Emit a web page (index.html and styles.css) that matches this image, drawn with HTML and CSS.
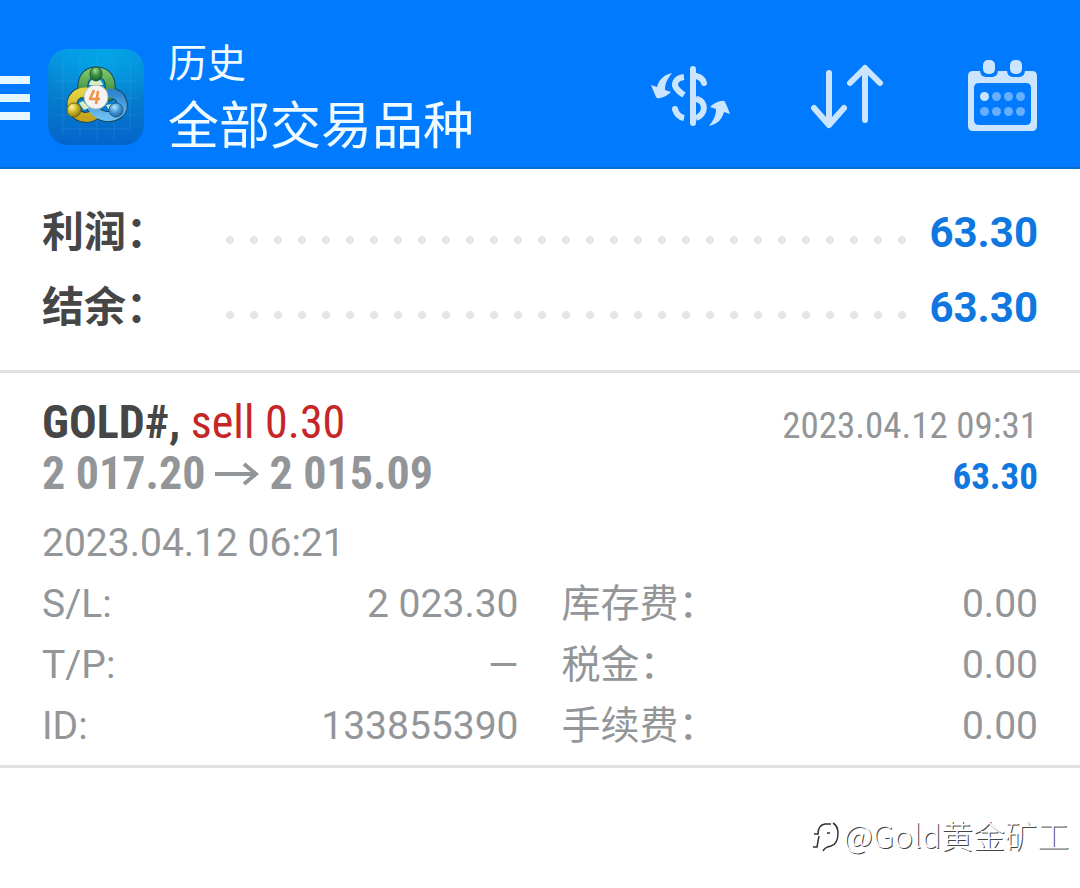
FILE: index.html
```html
<!DOCTYPE html>
<html lang="zh-CN">
<head>
<meta charset="utf-8">
<meta name="viewport" content="width=device-width, initial-scale=1">
<title>历史</title>
<link rel="stylesheet" href="styles.css">
</head>
<body>
<header class="topbar">
  <button class="icon-button menu" type="button" aria-label="菜单">
    <svg width="30" height="44" viewBox="0 0 30 44"><path d="M0 0h30v8H0zM0 18h30v8H0zM0 36h30v8H0z" fill="#e6f8ff"/></svg>
  </button>
  <svg class="logo" width="96" height="96" viewBox="0 0 96 96" aria-hidden="true">
    <defs>
      <linearGradient id="tile" x1="0" y1="0" x2="0" y2="1"><stop offset="0" stop-color="#0698e4"/><stop offset="0.5" stop-color="#067ccc"/><stop offset="1" stop-color="#0464cc"/></linearGradient>
      <radialGradient id="glow" cx="0.55" cy="0.1" r="0.6"><stop offset="0" stop-color="#00b0ec" stop-opacity="0.6"/><stop offset="1" stop-color="#00b0ec" stop-opacity="0"/></radialGradient>
      <linearGradient id="green" x1="0" y1="0" x2="0" y2="1"><stop offset="0" stop-color="#7cc068"/><stop offset="1" stop-color="#30883b"/></linearGradient>
      <linearGradient id="yellow" x1="0" y1="0" x2="0" y2="1"><stop offset="0" stop-color="#e4d444"/><stop offset="1" stop-color="#c4a41c"/></linearGradient>
      <linearGradient id="blue" x1="0" y1="0" x2="0" y2="1"><stop offset="0" stop-color="#2e86ce"/><stop offset="1" stop-color="#6cbcee"/></linearGradient>
      <radialGradient id="greenBall" cx="0.45" cy="0.25" r="0.7"><stop offset="0" stop-color="#a4dc90"/><stop offset="0.5" stop-color="#3e964a"/><stop offset="1" stop-color="#1c6730"/></radialGradient>
      <radialGradient id="yellowBall" cx="0.35" cy="0.3" r="0.7"><stop offset="0" stop-color="#fff6a0"/><stop offset="0.5" stop-color="#d1bb2a"/><stop offset="1" stop-color="#927c10"/></radialGradient>
      <radialGradient id="blueBall" cx="0.4" cy="0.3" r="0.7"><stop offset="0" stop-color="#b8e8ff"/><stop offset="0.5" stop-color="#4a9fda"/><stop offset="1" stop-color="#1d65aa"/></radialGradient>
    </defs>
    <rect width="96" height="96" rx="20" fill="url(#tile)"/>
    <rect width="96" height="96" rx="20" fill="url(#glow)"/>
    <path d="M8 32h80M4 49h88M8 66h80M14 80h68M15 10v76M32 6v84M49 4v88M66 6v84M82 12v70" stroke="#58c4ea" stroke-opacity="0.16" fill="none"/>
    <g fill="none" stroke-linecap="round">
      <g stroke="#17455c" stroke-width="11">
        <path d="M36 45C32 31 39 23 48 23C59 23 65 31 61 47"/>
        <path d="M39 43C26 42 20 54 27 63C32 70 43 70 48 64"/>
        <path d="M62 44C75 45 77 58 71 64C63 70 50 69 43 57"/>
      </g>
      <path d="M36 45C32 31 39 23 48 23C59 23 65 31 61 47" stroke="url(#green)" stroke-width="9"/>
      <path d="M39 43C26 42 20 54 27 63C32 70 43 70 48 64" stroke="url(#yellow)" stroke-width="9"/>
      <path d="M62 44C75 45 77 58 71 64C63 70 50 69 43 57" stroke="url(#blue)" stroke-width="9"/>
    </g>
    <path d="M41 36c1-5 4-6 7-6s6 2 7 6zM31 54l4-2 6 7-5 2zM58 56l6-1-3 6z" fill="#d9eec4"/>
    <ellipse cx="48" cy="25" rx="6" ry="7" fill="url(#greenBall)" stroke="#195d37"/>
    <circle cx="26" cy="61" r="7" fill="url(#yellowBall)" stroke="#766417"/>
    <circle cx="68" cy="61" r="7" fill="url(#blueBall)" stroke="#1c5d96"/>
    <circle cx="48" cy="48" r="12" fill="#f5f4f2" stroke="#b9b9b9"/>
    <path d="M46 41l-4 9h10M50 42l-2 13" fill="none" stroke="#f39142" stroke-width="2.500" stroke-linejoin="round"/>
  </svg>
  <div class="titles">
    <h1 class="title">历史</h1>
    <p class="subtitle">全部交易品种</p>
  </div>
  <nav class="actions" aria-label="工具">
    <button class="icon-button" type="button" aria-label="品种">
      <svg width="80" height="78" viewBox="0 0 80 78">
        <path d="M42 10v54" stroke="#cce5ff" stroke-width="6" stroke-linecap="round"/>
        <g fill="none" stroke="#cce5ff" stroke-width="6">
          <path d="M33 18C24 19 22 26 26 30C28 33 30 34 33 36"/>
          <path d="M24 50C25 54 28 58 33 59"/>
          <path d="M45 17C50 18 52 20 53 24" stroke-linecap="round"/>
          <path d="M45 40C56 42 55 56 45 59"/>
        </g>
        <circle cx="24" cy="50" r="3" fill="#cce5ff"/>
        <path d="M21 14C12 16 8 21 6 28L0 26Q2 31 5 38Q6 40 9 39Q15 38 20 33L14 31C14 24 17 19 21 14z" fill="#cce5ff"/>
        <path d="M58 67C67 65 71 60 73 53L79 55Q77 49 74 43Q73 41 70 42Q64 43 59 48L65 50C65 57 62 62 58 67z" fill="#cce5ff"/>
      </svg>
    </button>
    <button class="icon-button" type="button" aria-label="排序">
      <svg width="76" height="76" viewBox="0 0 76 76">
        <path d="M17 13v52M2 48l15 17 15-17M53 60V8M38 23L53 8l15 15" fill="none" stroke="#cce5ff" stroke-width="6" stroke-linecap="round" stroke-linejoin="round" transform="translate(1 0)"/>
      </svg>
    </button>
    <button class="icon-button" type="button" aria-label="日期">
      <svg width="70" height="84" viewBox="-1 5 70 84">
        <path d="M5 20H64Q69 20 69 25V75Q69 80 64 80H5Q0 80 0 75V25Q0 20 5 20zM11 32Q6 32 6 37V69Q6 74 11 74H58Q63 74 63 69V37Q63 32 58 32z" fill="#cce5ff" fill-rule="evenodd"/>
        <path d="M12 19h18q0 7-6 7h-6q-6 0-6-7zM39 19h18q0 7-6 7h-6q-6 0-6-7z" fill="#007aff"/>
        <rect x="15" y="9" width="12" height="14" rx="5" fill="#cce5ff"/>
        <rect x="42" y="9" width="12" height="14" rx="5" fill="#cce5ff"/>
        <circle cx="16.500" cy="45.500" r="4.500" fill="#cce5ff"/>
        <g fill="#66afff"><circle cx="28.500" cy="45.500" r="4.500"/><circle cx="40.500" cy="45.500" r="4.500"/><circle cx="52.500" cy="45.500" r="4.500"/><circle cx="16.500" cy="60.500" r="4.500"/><circle cx="28.500" cy="60.500" r="4.500"/><circle cx="40.500" cy="60.500" r="4.500"/><circle cx="52.500" cy="60.500" r="4.500"/></g>
      </svg>
    </button>
  </nav>
</header>
<main>
  <dl class="summary">
    <div class="summary-row"><dt class="han">利润：</dt><dd><span class="dots"></span><b>63.30</b></dd></div>
    <div class="summary-row"><dt class="han">结余：</dt><dd><span class="dots"></span><b>63.30</b></dd></div>
  </dl>
  <article class="deal">
    <div class="deal-head">
      <h2 class="symbol">GOLD#, <span class="side">sell 0.30</span></h2>
      <time class="close-time">2023.04.12 09:31</time>
    </div>
    <div class="deal-head">
      <p class="prices"><span>2 017.20</span>
        <svg class="arrow" width="44" height="24" viewBox="0 0 44 24" role="img" aria-label="至"><path d="M0 12h41M29 2l12 10-12 10" fill="none" stroke="#939699" stroke-width="4"/></svg>
        <span>2 015.09</span></p>
      <b class="profit">63.30</b>
    </div>
    <time class="open-time">2023.04.12 06:21</time>
    <dl class="details">
      <div class="pair"><dt>S/L:</dt><dd>2 023.30</dd></div>
      <div class="pair"><dt class="han">库存费：</dt><dd>0.00</dd></div>
      <div class="pair"><dt>T/P:</dt><dd>—</dd></div>
      <div class="pair"><dt class="han">税金：</dt><dd>0.00</dd></div>
      <div class="pair"><dt>ID:</dt><dd>133855390</dd></div>
      <div class="pair"><dt class="han">手续费：</dt><dd>0.00</dd></div>
    </dl>
  </article>
</main>
<footer class="credit">
  <svg class="credit-mark" width="30" height="36" viewBox="0 0 30 36" aria-hidden="true"><path d="M2 31h4l2-11M3 18h4Q7 9 14 8h6M22 7Q27 10 27 17Q27 28 20 30Q14 31 12 35M16 17h3" fill="none" stroke="#333" stroke-width="1.500"/></svg>
  <span>@Gold黄金矿工</span>
</footer>
</body>
</html>
```
FILE: styles.css
```css
* { box-sizing: border-box; }

body {
  margin: 0;
  background: #fff;
  color: #939699;
  font-family: Roboto, "Noto Sans CJK SC", sans-serif;
}

h1, h2, p, dl, dd { margin: 0; font-weight: 400; }
svg { display: block; }

.topbar {
  display: flex;
  align-items: center;
  min-height: 169px;
  padding: 28px 43px 0 0;
  background: #007aff;
  border-bottom: 2px solid #0a6cd2;
}

.icon-button {
  padding: 0;
  border: 0;
  background: none;
}

.menu { margin-right: 18px; }
.logo { margin-bottom: 2px; }

.titles {
  flex: 1;
  margin-left: 24px;
  padding-bottom: 12px;
  color: #effbff;
  font-family: "Noto Sans CJK SC", sans-serif;
  white-space: nowrap;
}

.title { font-size: 39px; line-height: 60px; }
.subtitle { font-size: 51px; line-height: 64px; }

.actions {
  display: flex;
  align-items: center;
  gap: 80px;
}

.summary {
  padding: 26px 42px 25px;
  border-bottom: 3px solid #e1e1e1;
}

.summary-row {
  display: flex;
  align-items: center;
  height: 75px;
  font-size: 42px;
  font-weight: 700;
}

.summary-row dt { width: 176px; color: #464646; }
.summary-row dd { flex: 1; display: flex; align-items: center; gap: 16px; }
.summary-row b { color: #0e77e0; }
.han { padding-bottom: 8px; }

.dots {
  flex: 1;
  height: 8px;
  margin-top: 14px;
  background: radial-gradient(circle, #e6e6e6 4px, transparent 4px) 0 0 / 24px 8px repeat-x;
}

.deal {
  padding: 24px 42px 9px;
  border-bottom: 3px solid #e1e1e1;
}

.deal-head {
  display: flex;
  align-items: baseline;
  justify-content: space-between;
  height: 51px;
  font-family: "Roboto Condensed", Roboto, sans-serif;
  line-height: 51px;
  white-space: nowrap;
}

.symbol { color: #464646; font-size: 46px; font-weight: 700; }
.side { color: #c62626; font-weight: 400; }
.close-time { font-size: 37px; }
.prices { display: flex; gap: 10px; font-size: 46px; font-weight: 700; }
.arrow { align-self: center; }
.profit { color: #0e77e0; font-size: 37px; }

.open-time {
  display: block;
  margin-top: 14px;
  font-size: 39px;
  line-height: 60px;
}

.details {
  display: grid;
  grid-template-columns: 1fr 1fr;
  column-gap: 43px;
}

.pair {
  display: flex;
  align-items: center;
  justify-content: space-between;
  height: 61px;
  font-size: 39px;
}

.credit {
  display: flex;
  align-items: center;
  justify-content: flex-end;
  gap: 2px;
  padding: 42px 11px 24px;
  color: #fff;
  font-family: "Noto Sans CJK SC", sans-serif;
  font-size: 32px;
  font-weight: 300;
  line-height: 48px;
  text-shadow: 1px 1px 0 #444;
}
```
